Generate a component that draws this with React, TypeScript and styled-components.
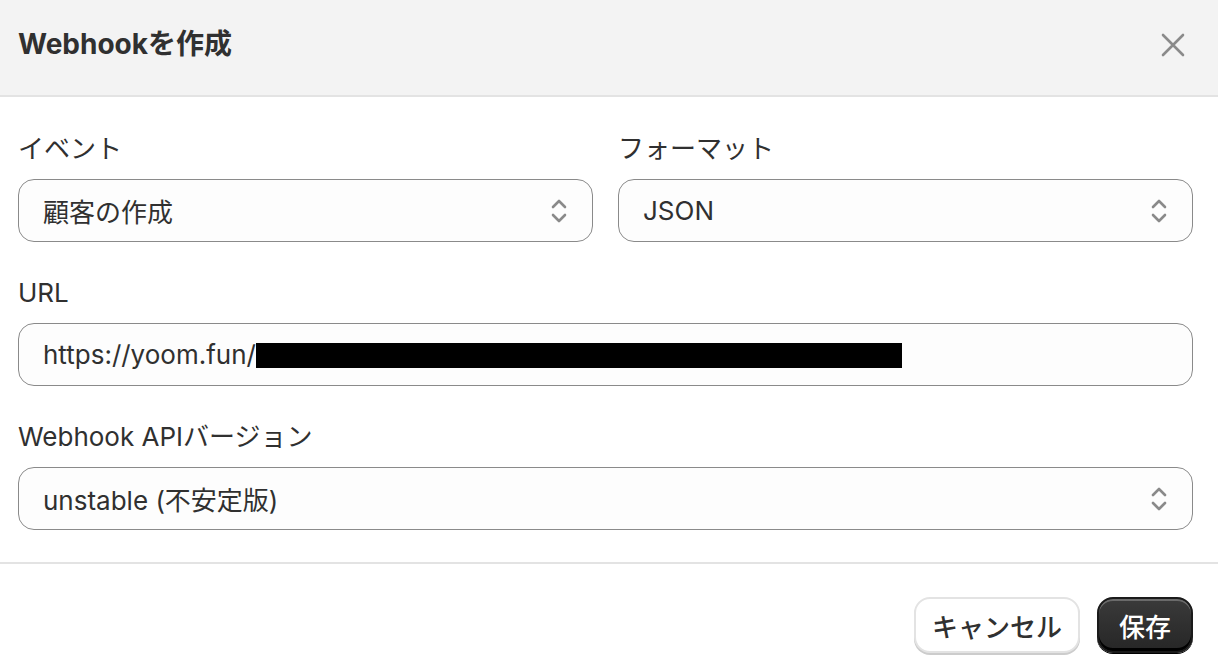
import React, { FC } from 'react';
import styled, { createGlobalStyle } from 'styled-components';

const GlobalStyle = createGlobalStyle`
  html, body {
    margin: 0;
    padding: 0;
    background: #ffffff;
  }
  body {
    font-family: Inter, 'Noto Sans CJK JP', sans-serif;
    color: #303030;
  }
`;

const StyledModal = styled.div`
  width: 1218px;
  height: 670px;
  overflow: hidden;
  background: #ffffff;
`;

const StyledHeader = styled.header`
  height: 97px;
  padding: 0 25px 11px 18px;
  box-sizing: border-box;
  display: flex;
  align-items: center;
  justify-content: space-between;
  background: #f3f3f3;
  border-bottom: 2px solid #e3e3e3;
`;

const StyledTitle = styled.h2`
  margin: 0;
  font-size: 28px;
  font-weight: 700;
  color: #303030;
`;

const StyledCloseButton = styled.button`
  width: 40px;
  height: 40px;
  padding: 0;
  margin-top: 6px;
  border: none;
  background: transparent;
  display: flex;
  align-items: center;
  justify-content: center;
`;

const StyledBody = styled.div`
  padding: 32px 25px 32px 18px;
  display: flex;
  flex-direction: column;
  gap: 31px;
  border-bottom: 2px solid #e3e3e3;
`;

const StyledRow = styled.div`
  display: grid;
  grid-template-columns: 1fr 1fr;
  gap: 25px;
`;

const StyledField = styled.div`
  display: flex;
  flex-direction: column;
`;

const StyledLabel = styled.label`
  display: block;
  height: 40px;
  line-height: 40px;
  margin-bottom: 10px;
  font-size: 26px;
  font-weight: 400;
  color: #303030;
`;

const StyledControl = styled.div`
  height: 63px;
  box-sizing: border-box;
  padding: 0 24px;
  display: flex;
  align-items: center;
  justify-content: space-between;
  border: 1.5px solid #8a8a8a;
  border-radius: 16px;
  background: #fdfdfd;
  font-size: 26px;
  color: #303030;
`;

const StyledValue = styled.span`
  display: flex;
  align-items: center;
  font-weight: 400;
`;

const StyledRedaction = styled.span`
  display: inline-block;
  width: 646px;
  height: 25px;
  background: #000000;
  margin-top: 2px;
`;

const StyledFooter = styled.footer`
  padding: 33px 25px 0 18px;
  display: flex;
  justify-content: flex-end;
  gap: 17px;
`;

const StyledButton = styled.button<{ $primary?: boolean }>`
  height: 56px;
  padding: 0 ${(p) => (p.$primary ? '20px' : '16px')};
  border-radius: 16px;
  font-family: Inter, 'Noto Sans CJK JP', sans-serif;
  font-size: 26px;
  font-weight: 500;
  color: ${(p) => (p.$primary ? '#ffffff' : '#303030')};
  background: ${(p) =>
    p.$primary ? 'linear-gradient(#3a3a3a, #262626)' : '#ffffff'};
  border: ${(p) => (p.$primary ? '2px solid #1a1a1a' : '2px solid #e3e3e3')};
  box-shadow: ${(p) =>
    p.$primary
      ? 'inset 0 2px 0 rgba(255,255,255,0.25), inset 0 -3px 0 #000, 0 1px 0 #000'
      : '0 2px 0 #cccccc'};
`;

const CloseIcon = () => (
  <svg width="24" height="24" viewBox="0 0 24 24">
    <path
      d="M2 2L22 22M22 2L2 22"
      stroke="#8a8a8a"
      strokeWidth="2.6"
      strokeLinecap="round"
    />
  </svg>
);

const SelectIcon = () => (
  <svg width="18" height="28" viewBox="0 0 18 28">
    <path
      d="M3 10L9 4L15 10M3 18L9 24L15 18"
      fill="none"
      stroke="#8a8a8a"
      strokeWidth="2.6"
      strokeLinecap="round"
      strokeLinejoin="round"
    />
  </svg>
);

interface SelectProps {
  value: string;
}

const Select: FC<SelectProps> = ({ value }) => (
  <StyledControl>
    <StyledValue>{value}</StyledValue>
    <SelectIcon />
  </StyledControl>
);

const App: FC = () => {
  return (
    <StyledModal>
      <GlobalStyle />
      <StyledHeader>
        <StyledTitle>Webhookを作成</StyledTitle>
        <StyledCloseButton>
          <CloseIcon />
        </StyledCloseButton>
      </StyledHeader>
      <StyledBody>
        <StyledRow>
          <StyledField>
            <StyledLabel>イベント</StyledLabel>
            <Select value='顧客の作成' />
          </StyledField>
          <StyledField>
            <StyledLabel>フォーマット</StyledLabel>
            <Select value='JSON' />
          </StyledField>
        </StyledRow>
        <StyledField>
          <StyledLabel>URL</StyledLabel>
          <StyledControl>
            <StyledValue>
              https://yoom.fun/
              <StyledRedaction />
            </StyledValue>
          </StyledControl>
        </StyledField>
        <StyledField>
          <StyledLabel>Webhook APIバージョン</StyledLabel>
          <Select value='unstable (不安定版)' />
        </StyledField>
      </StyledBody>
      <StyledFooter>
        <StyledButton>キャンセル</StyledButton>
        <StyledButton $primary>保存</StyledButton>
      </StyledFooter>
    </StyledModal>
  );
};

export default App;
